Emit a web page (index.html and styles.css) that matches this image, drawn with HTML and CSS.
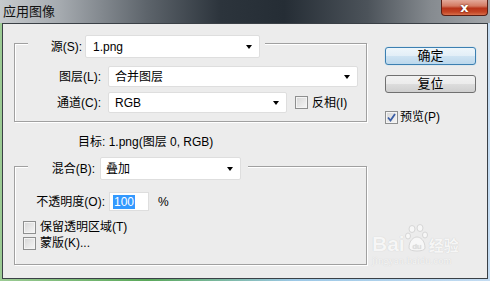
FILE: index.html
```html
<!DOCTYPE html>
<html lang="zh-CN">
<head>
<meta charset="UTF-8">
<title>应用图像</title>
<link rel="stylesheet" href="styles.css">
</head>
<body>
<div class="window">
    <div class="titlebar">
        <span class="title">应用图像</span>
        <span class="close">x</span>
    </div>
    <div class="client">
        <div class="main">
            <div class="group g1">
                <div class="head">
                    <label class="lbl lbl-src">源(S):</label>
                    <div class="select sel-src">1.png</div>
                </div>
                <div class="row">
                    <label class="lbl lbl-row">图层(L):</label>
                    <div class="select sel-layer">合并图层</div>
                </div>
                <div class="row">
                    <label class="lbl lbl-row">通道(C):</label>
                    <div class="select sel-chan">RGB</div>
                    <span class="check check-inv"><i class="box"></i>反相(I)</span>
                </div>
            </div>
            <div class="target">目标: 1.png(图层 0, RGB)</div>
            <div class="group g2">
                <div class="head head2">
                    <label class="lbl lbl-blend">混合(B):</label>
                    <div class="select sel-blend">叠加</div>
                </div>
                <div class="row row-opacity">
                    <label class="lbl lbl-op">不透明度(O):</label>
                    <div class="input"><span class="sel-text">100</span></div>
                    <span class="unit">%</span>
                </div>
                <div class="crow first"><i class="box"></i>保留透明区域(T)</div>
                <div class="crow"><i class="box"></i>蒙版(K)...</div>
            </div>
        </div>
        <div class="side">
            <div class="btn def">确定</div>
            <div class="btn reset">复位</div>
            <div class="check check-prev">
                <i class="box checked">
                    <svg width="11" height="11" viewBox="0 0 11 11"><path d="M2 5.5 L4.5 8.5 L9 2" fill="none" stroke="#3b5ea6" stroke-width="1.8"/></svg>
                </i>预览(P)
            </div>
        </div>
        <div class="watermark">
            <div class="wm-top">
                <span class="wm-bai">Bai</span>
                <svg class="wm-paw" width="24" height="30" viewBox="0 0 24 30">
                    <g fill="#f7f7f7" stroke="#d6d6d6" stroke-width="1">
                        <ellipse cx="7" cy="5" rx="3" ry="3.5"/>
                        <ellipse cx="15" cy="4" rx="3" ry="3.5"/>
                        <ellipse cx="3" cy="12" rx="2.5" ry="3"/>
                        <ellipse cx="20" cy="11" rx="2.5" ry="3"/>
                        <path d="M4 24 C4 16 9 13 12 13 C15 13 20 16 20 24 C20 28 4 28 4 24 Z"/>
                    </g>
                    <text x="12" y="25" font-size="8" text-anchor="middle" fill="#dcdcdc" font-family="Liberation Sans">du</text>
                </svg>
                <span class="wm-jy">经验</span>
            </div>
            <div class="wm-url">jingyan.baidu.com</div>
        </div>
    </div>
</div>
</body>
</html>
```

FILE: styles.css
```css
body {
    margin: 0;
    font-family: "Liberation Sans", "Noto Sans CJK SC", sans-serif;
    font-size: 12px;
    line-height: 16px;
    color: #000;
}
.window {
    width: 490px;
    height: 281px;
    display: flex;
    flex-direction: column;
    background: linear-gradient(90deg, #9ccb94, #5aa85a 30%, #9cc8e6 60%, #c4dcf2);
}
.titlebar {
    height: 23px;
    display: flex;
    justify-content: space-between;
    align-items: flex-start;
    background: linear-gradient(90deg, #c6cacd 0%, #a6abb0 12%, #5d646b 30%, #2c343c 45%, #252d35 58%, #4c535a 75%, #868b90 88%, #a2a6aa 100%);
}
.title {
    padding: 3px 0 0 3px;
    font-size: 13px;
    line-height: 17px;
    color: #111;
}
.close {
    width: 47px;
    height: 16px;
    margin-right: 2px;
    box-sizing: border-box;
    border: 1px solid #5a1e14;
    border-top: none;
    border-radius: 0 0 4px 4px;
    background: linear-gradient(#e3a99a 0%, #d47a62 40%, #b8341a 55%, #c44424 80%, #d8704c 100%);
    color: #fff;
    display: flex;
    align-items: center;
    justify-content: center;
    font: bold 13px/15px "DejaVu Sans", sans-serif;
    text-shadow: 0 0 2px #4a1008;
}
.client {
    position: relative;
    height: 256px;
    margin: 0 2px;
    box-sizing: border-box;
    border: 1px solid #3a4046;
    background: #ececec;
    display: flex;
    align-items: flex-start;
    padding: 19px 0 0 11px;
}
.main {
    width: 353px;
}
.group {
    border: 1px solid #a0a0a0;
    box-shadow: inset 1px 1px 0 #fff, 1px 1px 0 #fff;
}
.g1 {
    padding-bottom: 8px;
}
.g2 {
    padding-bottom: 13px;
}
.head {
    display: flex;
    align-items: center;
    width: fit-content;
    background: #ececec;
    margin: -9px 0 0 13px;
    padding-right: 5px;
}
.head2 {
    margin-top: -10px;
    padding-right: 7px;
}
.lbl {
    text-align: right;
    flex: none;
}
.lbl-src { width: 54px; }
.lbl-row { width: 86px; }
.lbl-blend { width: 67px; }
.lbl-op { width: 90px; }

.select {
    position: relative;
    height: 21px;
    box-sizing: border-box;
    background: #fff;
    border: 1px solid #dedede;
    border-radius: 2px;
    padding-left: 6px;
    display: flex;
    align-items: center;
}
.select::after {
    content: "";
    position: absolute;
    right: 7px;
    top: 50%;
    margin-top: -2px;
    border-left: 3px solid transparent;
    border-right: 3px solid transparent;
    border-top: 4px solid #000;
}
.sel-src {
    width: 175px;
    height: 23px;
    margin-left: 3px;
    padding-left: 7px;
}
.sel-layer {
    width: 250px;
    margin-left: 7px;
}
.sel-chan {
    width: 179px;
    margin-left: 7px;
}
.sel-blend {
    width: 141px;
    height: 23px;
    margin-left: 5px;
    padding-left: 5px;
}
.row {
    display: flex;
    align-items: center;
    margin-top: 5px;
}
.g1 .head + .row {
    margin-top: 8px;
}
.row-opacity {
    margin-top: 12px;
}
.input {
    width: 40px;
    height: 19px;
    box-sizing: border-box;
    margin-left: 4px;
    background: #fff;
    border: 1px solid #dedede;
    display: flex;
    align-items: center;
}
.sel-text {
    margin-left: 3px;
    padding: 0 1px;
    line-height: 14px;
    background: #3399ff;
    color: #fff;
}
.unit {
    margin-left: 9px;
}
.box {
    display: inline-block;
    flex: none;
    width: 13px;
    height: 13px;
    box-sizing: border-box;
    border: 1px solid #8e8f8f;
    background: linear-gradient(135deg, #d6d6d6, #f6f6f6);
    box-shadow: inset 0 0 0 1px #f4f4f4;
    margin-right: 4px;
}
.box svg {
    display: block;
}
.check {
    display: flex;
    align-items: center;
}
.check-inv {
    margin-left: 8px;
}
.crow {
    display: flex;
    align-items: center;
    height: 16px;
    padding-left: 8px;
}
.crow.first {
    margin-top: 8px;
}
.target {
    margin: 12px 0 16px 64px;
}
.side {
    width: 91px;
    margin-left: 18px;
    display: flex;
    flex-direction: column;
}
.btn {
    height: 18px;
    box-sizing: border-box;
    border: 1px solid #707070;
    border-radius: 3px;
    text-align: center;
    line-height: 16px;
    font-size: 13px;
    background: linear-gradient(#f2f2f2 0%, #ebebeb 50%, #dddddd 50%, #cfcfcf 100%);
}
.btn.def {
    margin-top: 4px;
    border-color: #3c7fb1;
    background: linear-gradient(#eef6fb 0%, #e2eef7 50%, #cfe3f2 50%, #bcd8ec 100%);
    box-shadow: 0 0 1px #6cc0f0;
}
.btn.reset {
    margin-top: 10px;
}
.check-prev {
    margin-top: 16px;
}
.check-prev .box {
    margin-right: 2px;
}
.watermark {
    position: absolute;
    left: 369px;
    top: 200px;
    color: #f6f6f6;
    text-shadow: 0 0 1px #c6c6c6;
}
.wm-top {
    display: flex;
    align-items: flex-end;
}
.wm-bai {
    font: bold 21px/20px "Liberation Sans", sans-serif;
}
.wm-jy {
    font: bold 15px/18px "Noto Sans CJK SC", sans-serif;
}
.wm-url {
    font: 10px/10px "Liberation Serif", serif;
    letter-spacing: 0.3px;
    margin-top: 2px;
}
```
